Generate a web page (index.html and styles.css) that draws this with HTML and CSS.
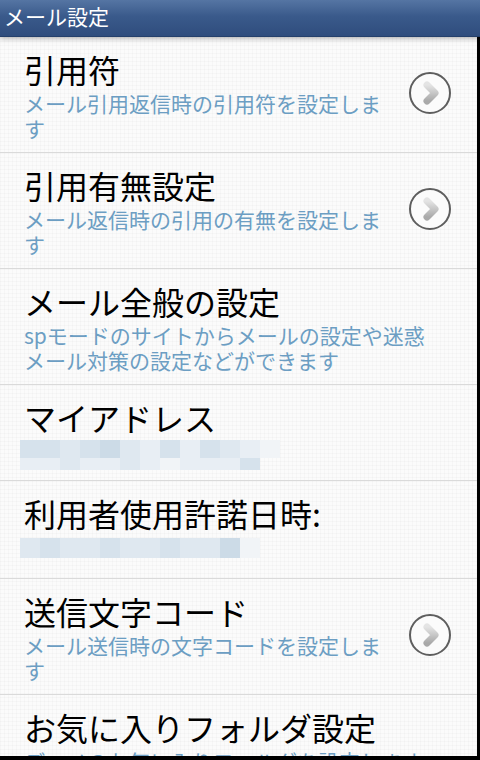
FILE: index.html
```html
<!DOCTYPE html>
<html lang="ja">
<head>
    <meta charset="UTF-8">
    <meta name="viewport" content="width=device-width, initial-scale=1.0">
    <title>メール設定</title>
    <link rel="stylesheet" href="styles.css">
</head>
<body>

    <div class="screen">
        <div class="title-bar">メール設定</div>

        <ul class="settings-list">
            <li class="item">
                <div class="item-text">
                    <div class="item-title">引用符</div>
                    <div class="item-sub">メール引用返信時の引用符を設定しま<br>す</div>
                </div>
                <svg class="arrow" width="44" height="44" viewBox="0 0 44 44">
                    <defs>
                        <linearGradient id="chev1" x1="0" y1="0" x2="0" y2="1">
                            <stop offset="0" stop-color="#e4e4e4"/>
                            <stop offset="1" stop-color="#a9a9a9"/>
                        </linearGradient>
                    </defs>
                    <circle cx="22" cy="22" r="20" fill="#fbfbfb" stroke="#5e5e5e" stroke-width="2"/>
                    <path d="M19 14 L27 22 L19 30" fill="none" stroke="url(#chev1)" stroke-width="7" stroke-linecap="round" stroke-linejoin="round"/>
                </svg>
            </li>
            <li class="item">
                <div class="item-text">
                    <div class="item-title">引用有無設定</div>
                    <div class="item-sub">メール返信時の引用の有無を設定しま<br>す</div>
                </div>
                <svg class="arrow" width="44" height="44" viewBox="0 0 44 44">
                    <circle cx="22" cy="22" r="20" fill="#fbfbfb" stroke="#5e5e5e" stroke-width="2"/>
                    <path d="M19 14 L27 22 L19 30" fill="none" stroke="url(#chev1)" stroke-width="7" stroke-linecap="round" stroke-linejoin="round"/>
                </svg>
            </li>
            <li class="item">
                <div class="item-text">
                    <div class="item-title">メール全般の設定</div>
                    <div class="item-sub">spモードのサイトからメールの設定や迷惑<br>メール対策の設定などができます</div>
                </div>
            </li>
            <li class="item short">
                <div class="item-text">
                    <div class="item-title">マイアドレス</div>
                    <div class="mosaic">
                        <div class="mosaic-row tall">
                            <span class="m2"></span><span class="m2"></span><span class="m3"></span><span class="m2"></span><span class="m1"></span><span class="m3"></span><span class="m4"></span><span class="m2"></span><span class="m4"></span><span class="m2"></span><span class="m3"></span><span class="m4"></span><span class="m5"></span>
                        </div>
                        <div class="mosaic-row low">
                            <span class="m4"></span><span class="m4"></span><span class="m3"></span><span class="m4"></span><span class="m4"></span><span class="m3"></span><span class="m4"></span><span class="m5"></span><span class="m4"></span><span class="m4"></span><span class="m4"></span><span class="m2"></span>
                        </div>
                    </div>
                </div>
            </li>
            <li class="item short date">
                <div class="item-text">
                    <div class="item-title">利用者使用許諾日時:</div>
                    <div class="mosaic single">
                        <div class="mosaic-row mid">
                            <span class="m3"></span><span class="m2"></span><span class="m3"></span><span class="m3"></span><span class="m2"></span><span class="m3"></span><span class="m3"></span><span class="m2"></span><span class="m3"></span><span class="m3"></span><span class="m1"></span><span class="m5"></span>
                        </div>
                    </div>
                </div>
            </li>
            <li class="item">
                <div class="item-text">
                    <div class="item-title">送信文字コード</div>
                    <div class="item-sub">メール送信時の文字コードを設定しま<br>す</div>
                </div>
                <svg class="arrow" width="44" height="44" viewBox="0 0 44 44">
                    <circle cx="22" cy="22" r="20" fill="#fbfbfb" stroke="#5e5e5e" stroke-width="2"/>
                    <path d="M19 14 L27 22 L19 30" fill="none" stroke="url(#chev1)" stroke-width="7" stroke-linecap="round" stroke-linejoin="round"/>
                </svg>
            </li>
            <li class="item">
                <div class="item-text">
                    <div class="item-title">お気に入りフォルダ設定</div>
                    <div class="item-sub">デコメのお気に入りフォルダを設定します</div>
                </div>
            </li>
        </ul>
    </div>

</body>
</html>
```

FILE: styles.css
```css
body {
    margin: 0;
    background-color: #000;
    font-family: "Noto Sans CJK JP", "Noto Sans", sans-serif;
}

.screen {
    width: 480px;
    height: 760px;
    display: flex;
    flex-direction: column;
    overflow: hidden;
}

.title-bar {
    height: 36px;
    line-height: 33px;
    padding-left: 4px;
    background: linear-gradient(#5575a3, #3a5a8b 45%, #2f4d7d);
    border-bottom: 1px solid #24406b;
    color: #fff;
    font-size: 21px;
    flex-shrink: 0;
    position: relative;
    z-index: 1;
    box-shadow: 0 2px 5px rgba(0, 0, 0, 0.25);
}

.settings-list {
    list-style: none;
    margin: 0 3px 4px 0;
    padding: 0;
    flex: 1;
    overflow: hidden;
    background-color: #fbfbfb;
    background-image:
        linear-gradient(90deg, rgba(0, 0, 0, 0.018) 1px, transparent 1px),
        linear-gradient(rgba(0, 0, 0, 0.018) 1px, transparent 1px);
    background-size: 4px 4px;
}

.item {
    display: flex;
    align-items: center;
    padding: 14px 25px 11px 24px;
    border-bottom: 1px solid #dadada;
    flex-shrink: 0;
}

.item.short {
    padding: 14px 25px 10px 20px;
}

.item.date {
    padding-bottom: 20px;
}

.item-text {
    flex: 1;
}

.item-title {
    font-size: 32px;
    line-height: 36px;
    color: #000;
}

.short .item-title {
    padding-left: 4px;
}

.item-sub {
    font-size: 21px;
    line-height: 25px;
    color: #6c9ec3;
    margin-top: 4px;
    white-space: nowrap;
}

.arrow {
    flex-shrink: 0;
    margin-top: -6px;
}

.mosaic {
    margin-top: 5px;
    display: flex;
    flex-direction: column;
}

.mosaic.single {
    margin-top: 7px;
}

.mosaic-row {
    display: flex;
}

.mosaic-row span {
    width: 20px;
}

.mosaic-row.tall span {
    height: 18px;
}

.mosaic-row.low span {
    height: 12px;
}

.mosaic-row.mid span {
    height: 20px;
}

.m1 { background: #ccdbe7; }
.m2 { background: #d6e2ec; }
.m3 { background: #dfe8f0; }
.m4 { background: #e8eef4; }
.m5 { background: #f1f4f7; }
```
